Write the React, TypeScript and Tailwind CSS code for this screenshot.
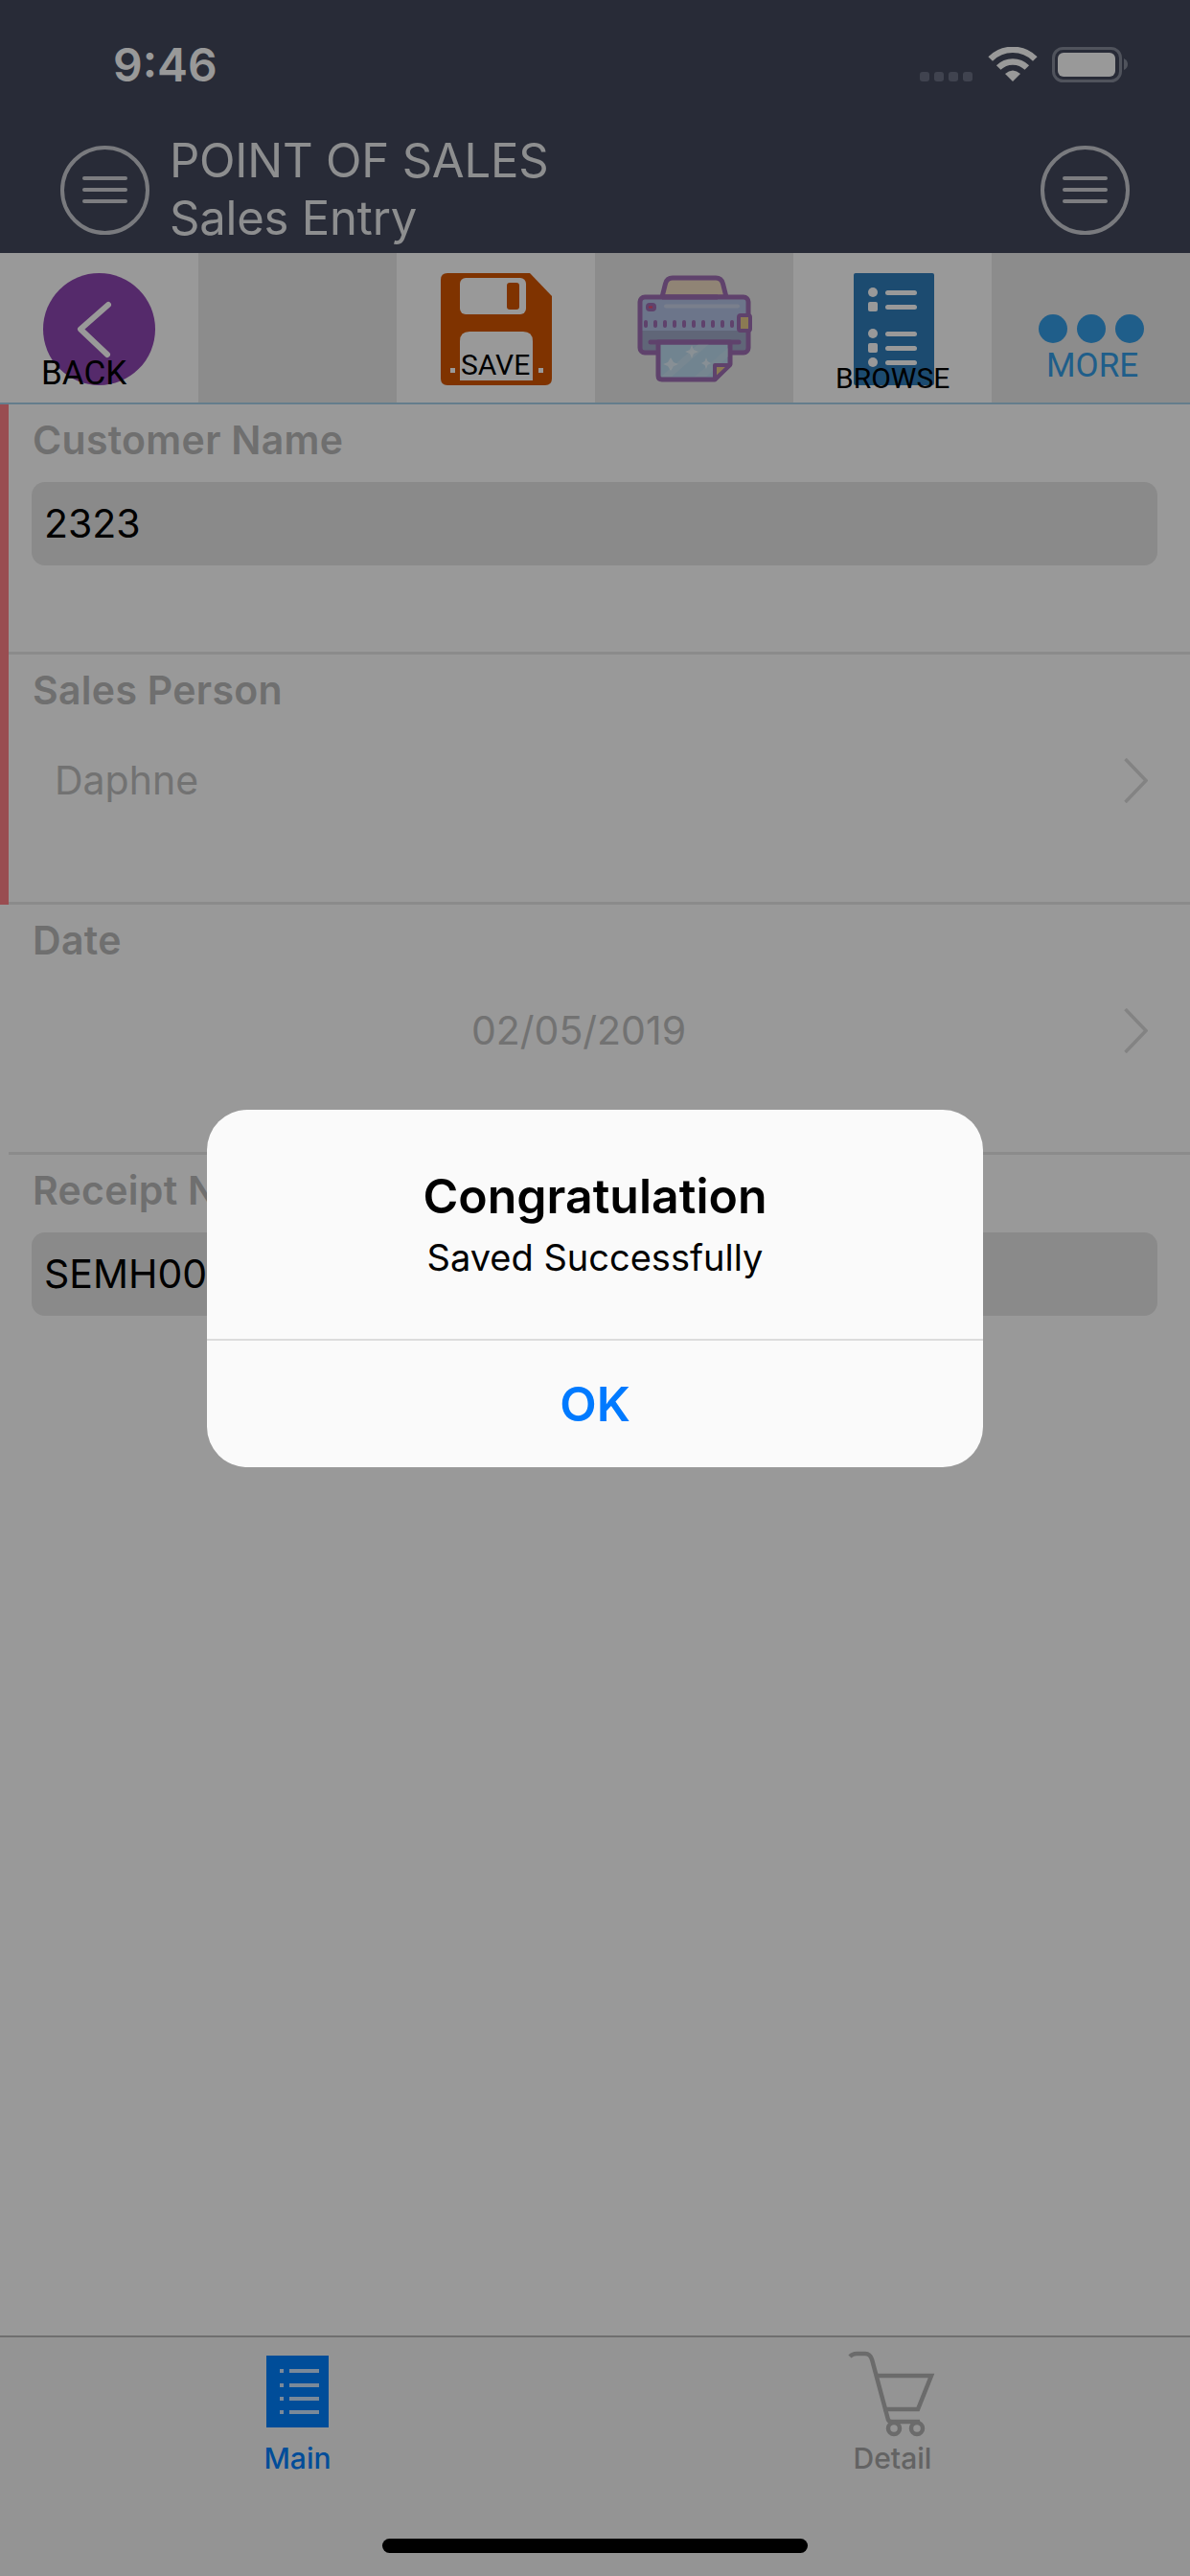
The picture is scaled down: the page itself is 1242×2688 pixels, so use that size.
import React from "react";

const sans = "font-['Inter','Liberation_Sans',sans-serif]";

function MenuCircle() {
  return (
    <svg width="93" height="93" viewBox="0 0 93 93" className="shrink-0 mt-[14px]">
      <ellipse cx="46.5" cy="46.5" rx="44.5" ry="44.5" fill="none" stroke="#ffffff" strokeOpacity="0.72" strokeWidth="4" />
      <g stroke="#ffffff" strokeOpacity="0.75" strokeWidth="4" strokeLinecap="round">
        <line x1="25" y1="34" x2="68" y2="34" />
        <line x1="25" y1="46" x2="68" y2="46" />
        <line x1="25" y1="58" x2="68" y2="58" />
      </g>
    </svg>
  );
}

function StatusIcons() {
  return (
    <svg width="217" height="37" viewBox="0 0 217 37" className="mt-[5px]">
      <g fill="#6b7184">
        <rect x="0" y="26" width="10" height="10" rx="3" />
        <rect x="15" y="26" width="10" height="10" rx="3" />
        <rect x="30" y="26" width="10" height="10" rx="3" />
        <rect x="45" y="26" width="10" height="10" rx="3" />
      </g>
      <g fill="none" stroke="#ffffff" strokeWidth="6.5">
        <path d="M73.7 12.5 A33 33 0 0 1 120.3 12.5" />
        <path d="M82.2 21.5 A21 21 0 0 1 111.8 21.5" />
      </g>
      <path d="M97 36 L89 28 Q97 21 105 28 Z" fill="#ffffff" />
      <rect x="139.5" y="1.5" width="70" height="34" rx="10" fill="none" stroke="#858a99" strokeWidth="3" />
      <rect x="144" y="6" width="60" height="25" rx="6" fill="#ffffff" />
      <path d="M213 12 Q217 14 217 18 Q217 22 213 24 Z" fill="#858a99" />
    </svg>
  );
}

function BackIcon() {
  return (
    <svg width="117" height="117" viewBox="0 0 117 117">
      <circle cx="58.5" cy="58.5" r="58.5" fill="#8e46b2" />
      <path d="M68 33 L39 58.5 L67 85" fill="none" stroke="#ffffff" strokeWidth="6" strokeLinecap="round" strokeLinejoin="round" />
    </svg>
  );
}

function SaveIcon() {
  return (
    <svg width="116" height="117" viewBox="0 0 116 117">
      <path d="M7 0 H93 L116 24 V110 Q116 117 109 117 H7 Q0 117 0 110 V7 Q0 0 7 0 Z" fill="#d45500" />
      <rect x="20" y="5" width="69" height="38" rx="6" fill="#ffffff" />
      <rect x="69" y="10" width="13" height="28" rx="3" fill="#d45500" />
      <path d="M20 112 V71 Q20 61 30 61 H86 Q96 61 96 71 V112 Z" fill="#ffffff" />
      <rect x="10" y="99" width="5" height="5" fill="#ffffff" />
      <rect x="102" y="99" width="5" height="5" fill="#ffffff" />
    </svg>
  );
}

function PrinterIcon() {
  return (
    <svg width="140" height="125" viewBox="0 0 140 125">
      <path d="M36 30 L39.5 16 Q41 10 47 10 H92 Q98 10 99.5 16 L103 30 Z" fill="#f0dcc4" stroke="#9f6eb4" strokeWidth="5" strokeLinejoin="round" />
      <rect x="13" y="30" width="113" height="58" rx="5" fill="#b5c4e6" />
      <path d="M13 65 H126 V83 Q126 88 121 88 H18 Q13 88 13 83 Z" fill="#a0abc9" />
      <rect x="13" y="30" width="113" height="58" rx="5" fill="none" stroke="#9f6eb4" strokeWidth="5" />
      <line x1="36" y1="30" x2="94" y2="30" stroke="#9f6eb4" strokeWidth="5" />
      <rect x="19" y="36" width="11" height="9" rx="4" fill="#9f6eb4" />
      <rect x="22" y="39.5" width="4" height="2" fill="#f04a6a" />
      <rect x="38" y="37.5" width="79" height="4" rx="2" fill="#ccd4ea" />
      <g fill="#9f6eb4">
        <rect x="17" y="54" width="4" height="8" rx="2" />
        <rect x="27" y="54" width="4" height="8" rx="2" />
        <rect x="37" y="54" width="4" height="8" rx="2" />
        <rect x="47" y="54" width="4" height="8" rx="2" />
        <rect x="57" y="54" width="4" height="8" rx="2" />
        <rect x="67" y="54" width="4" height="8" rx="2" />
        <rect x="77" y="54" width="4" height="8" rx="2" />
        <rect x="87" y="54" width="4" height="8" rx="2" />
        <rect x="97" y="54" width="4" height="8" rx="2" />
        <rect x="107" y="54" width="4" height="8" rx="2" />
      </g>
      <rect x="116" y="49" width="12" height="16" rx="2" fill="#e8cb8a" stroke="#9f6eb4" strokeWidth="4" />
      <path d="M32 77 H107 V100 L91 116 H36 Q32 116 32 112 Z" fill="#bcdcf0" stroke="#9f6eb4" strokeWidth="5" strokeLinejoin="round" />
      <path d="M46 113 L85 79 H74 L35 113 Z" fill="#d8e8f4" opacity="0.45" />
      <path d="M70 113 L105 83 V92 L82 113 Z" fill="#d8e8f4" opacity="0.35" />
      <path d="M45 93 L48 98 L53 100 L48 102 L45 107 L42 102 L37 100 L42 98 Z" fill="#ffffff" opacity="0.55" />
      <path d="M67 80 L69 85 L74 87 L69 89 L67 94 L65 89 L60 87 L65 85 Z" fill="#ffffff" opacity="0.55" />
      <path d="M82 93 L83.5 97 L87 99 L83.5 101 L82 105 L80.5 101 L77 99 L80.5 97 Z" fill="#ffffff" opacity="0.55" />
      <path d="M91 116 V101 H107 Z" fill="#e8cb8a" stroke="#9f6eb4" strokeWidth="4" strokeLinejoin="round" />
      <line x1="24" y1="77" x2="116" y2="77" stroke="#9f6eb4" strokeWidth="5" strokeLinecap="round" />
    </svg>
  );
}

function BrowseIcon() {
  return (
    <svg width="84" height="117" viewBox="0 0 84 117" className="ml-[3px]">
      <rect x="0" y="0" width="84" height="117" rx="2" fill="#2f7dbb" />
      <g fill="#ffffff">
        <ellipse cx="20" cy="20" rx="5" ry="5" />
        <rect x="15" y="30" width="10" height="10" rx="2" />
        <ellipse cx="20" cy="63" rx="5" ry="5" />
        <rect x="15" y="73" width="10" height="10" rx="2" />
        <ellipse cx="20" cy="93" rx="5" ry="5" />
        <rect x="33" y="18" width="33" height="5" rx="2.5" />
        <rect x="33" y="33" width="33" height="5" rx="2.5" />
        <rect x="33" y="61" width="33" height="5" rx="2.5" />
        <rect x="33" y="76" width="33" height="5" rx="2.5" />
        <rect x="33" y="91" width="33" height="5" rx="2.5" />
      </g>
    </svg>
  );
}

function MainIcon() {
  return (
    <svg width="65" height="75" viewBox="0 0 65 75" className="mb-[4px]">
      <rect x="0" y="0" width="65" height="75" fill="#0080ff" />
      <g fill="#ffffff" opacity="0.8">
        <rect x="24" y="14" width="31" height="4" />
        <rect x="24" y="29" width="31" height="4" />
        <rect x="24" y="43" width="31" height="4" />
        <rect x="24" y="57" width="31" height="4" />
        <rect x="14" y="14" width="4" height="4" />
        <rect x="14" y="29" width="4" height="4" />
        <rect x="14" y="43" width="4" height="4" />
        <rect x="14" y="57" width="4" height="4" />
      </g>
    </svg>
  );
}

function CartIcon() {
  return (
    <svg width="105" height="105" viewBox="0 0 105 105" className="ml-[3px]">
      <g fill="none" stroke="#b2b2b2" strokeWidth="4.5">
        <path d="M6 14 Q9 11 13 11 H22 Q27 11 29 17 L46 80 Q47 82 50 82 H79" />
        <path d="M33 34 H91 L77 69 H41" />
        <circle cx="52" cy="89" r="6" />
        <circle cx="76" cy="89" r="6" />
      </g>
    </svg>
  );
}

function Chevron() {
  return (
    <svg width="25" height="47" viewBox="0 0 25 47" className="shrink-0">
      <path d="M1.5 1 L23 23.5 L1.5 46" fill="none" stroke="#dadada" strokeWidth="3.5" />
    </svg>
  );
}

function Row({ label, marked, last, children }: { label: string; marked?: boolean; last?: boolean; children: React.ReactNode }) {
  return (
    <div className={last ? "flex flex-1" : "flex h-[261px]"}>
      <div className={marked ? "w-[9px] shrink-0 bg-[#ff8088]" : "w-[9px] shrink-0"} />
      <div className={last ? "flex-1 min-w-0" : "flex-1 min-w-0 border-b-[3px] border-[#e8e8e8]"}>
        <div className="pt-[17px] pl-[25px] text-[41px] leading-[41px] font-semibold tracking-[0.3px] text-[#b9b9b9]">{label}</div>
        {children}
      </div>
    </div>
  );
}

function InputBox({ value }: { value: string }) {
  return (
    <div className="mt-[23px] ml-[24px] w-[1175px] h-[87px] rounded-[14px] bg-[#e6e6e6] flex items-center pl-[13px] text-[41px] leading-[41px] text-black">
      {value}
    </div>
  );
}

export default function App() {
  return (
    <div className={`relative w-[1242px] h-[2688px] overflow-hidden bg-white flex flex-col ${sans}`}>
      {/* header */}
      <div className="h-[264px] shrink-0 bg-[#43495d] text-white">
        <div className="h-[138px] flex items-start justify-between pl-[118px] pr-[65px] pt-[44px]">
          <div className="text-[48px] leading-[48px] font-semibold">9:46</div>
          <StatusIcons />
        </div>
        <div className="flex items-start pl-[63px] pr-[63px]">
          <MenuCircle />
          <div className="ml-[21px] flex-1 text-[49px] leading-[60px] font-normal tracking-[-0.2px] opacity-90">
            <div>POINT OF SALES</div>
            <div>Sales Entry</div>
          </div>
          <MenuCircle />
        </div>
      </div>

      {/* toolbar */}
      <div className="h-[158px] shrink-0 grid grid-cols-6 border-b-[2px] border-[#a7d0e9] font-['Roboto',sans-serif]">
        <div className="relative flex justify-center pt-[21px] bg-white">
          <BackIcon />
          <span className="absolute left-[43px] top-[109px] text-[35px] leading-[34px] text-black">BACK</span>
        </div>
        <div className="bg-[#e9e9e9]" />
        <div className="relative flex justify-center pt-[21px] bg-white">
          <SaveIcon />
          <span className="absolute left-[67px] top-[102px] text-[30px] leading-[30px] text-black">SAVE</span>
        </div>
        <div className="flex justify-center pt-[16px] bg-[#e9e9e9]">
          <PrinterIcon />
        </div>
        <div className="relative flex justify-center pt-[21px] bg-white">
          <BrowseIcon />
          <span className="absolute left-[44px] top-[116px] text-[30px] leading-[30px] text-black">BROWSE</span>
        </div>
        <div className="relative flex justify-center gap-[10px] pt-[64px] bg-[#e9e9e9]">
          <div className="w-[30px] h-[30px] rounded-full bg-[#359de6]" />
          <div className="w-[30px] h-[30px] rounded-full bg-[#359de6]" />
          <div className="w-[30px] h-[30px] rounded-full bg-[#359de6]" />
          <span className="absolute left-[57px] top-[100px] text-[35px] leading-[35px] text-[#359de6]">MORE</span>
        </div>
      </div>

      {/* form */}
      <div className="flex-1 flex flex-col min-h-0">
        <Row label="Customer Name" marked>
          <InputBox value="2323" />
        </Row>
        <Row label="Sales Person" marked>
          <div className="mt-[50px] pl-[48px] pr-[44px] flex items-center justify-between text-[41px] leading-[41px] text-[#bebebe]">
            <span>Daphne</span>
            <Chevron />
          </div>
        </Row>
        <Row label="Date">
          <div className="mt-[50px] pl-[26px] pr-[44px] flex items-center text-[41px] leading-[41px] text-[#bebebe]">
            <span className="flex-1 text-center">02/05/2019</span>
            <Chevron />
          </div>
        </Row>
        <Row label="Receipt No" last>
          <InputBox value="SEMH0001" />
        </Row>
      </div>

      {/* tab bar */}
      <div className="h-[251px] shrink-0 flex flex-col bg-[#f7f7f7] border-t-[2px] border-[#b9b9b9]">
        <div className="grid grid-cols-2 pt-[6px]">
          <div className="flex flex-col items-center">
            <div className="h-[105px] flex items-center justify-center">
              <MainIcon />
            </div>
            <div className="text-[30px] leading-[30px] font-medium text-[#0080ff]">Main</div>
          </div>
          <div className="flex flex-col items-center">
            <div className="h-[105px] flex items-center justify-center">
              <CartIcon />
            </div>
            <div className="text-[30px] leading-[30px] font-medium text-[#a5a5a5]">Detail</div>
          </div>
        </div>
        <div className="mt-auto mb-[24px] mx-auto w-[444px] h-[15px] rounded-full bg-black" />
      </div>

      {/* alert overlay */}
      <div className="absolute inset-0 bg-black/40 flex items-center justify-center">
        <div className="w-[810px] h-[373px] rounded-[42px] bg-[#fafafa] flex flex-col text-center text-black">
          <div className="h-[241px] pt-[65px] border-b-[2px] border-[#dcdcdc]">
            <div className="text-[50px] leading-[50px] font-semibold">Congratulation</div>
            <div className="mt-[20px] text-[38px] leading-[39px]">Saved Successfully</div>
          </div>
          <div className="flex-1 flex items-center justify-center text-[50px] leading-[50px] font-semibold text-[#007aff]">OK</div>
        </div>
      </div>
    </div>
  );
}
